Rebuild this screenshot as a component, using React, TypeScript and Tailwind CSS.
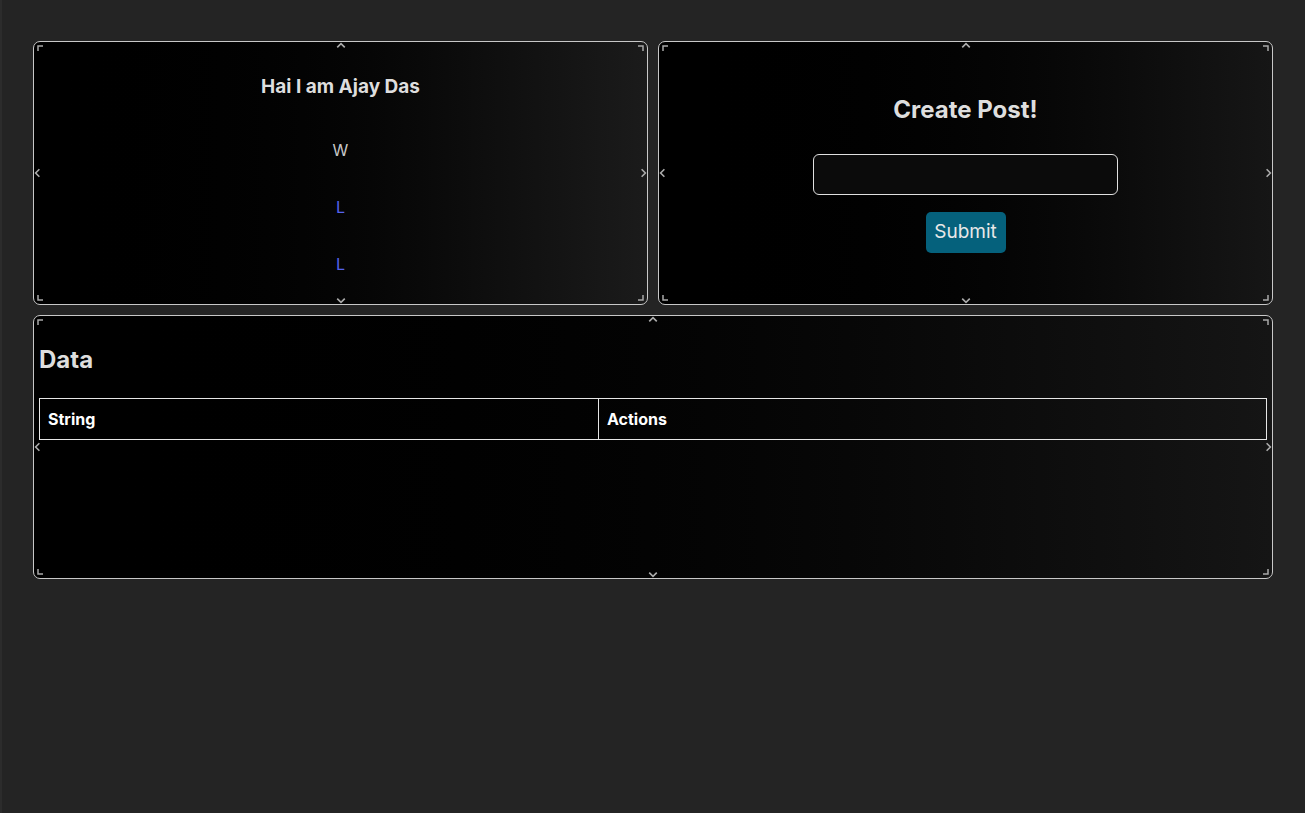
import type { ReactNode } from "react";

function Chevron({ dir }: { dir: "up" | "down" | "left" | "right" }) {
  const d = {
    up: "M1 5 L4.5 1.5 L8 5",
    down: "M1 1.5 L4.5 5 L8 1.5",
    left: "M5 1 L1.5 4.5 L5 8",
    right: "M1.5 1 L5 4.5 L1.5 8",
  }[dir];
  const box = dir === "up" || dir === "down" ? "0 0 9 6.5" : "0 0 6.5 9";
  const size = dir === "up" || dir === "down" ? "h-[7px] w-[10px]" : "h-[10px] w-[7px]";
  return (
    <svg viewBox={box} className={size} fill="none" stroke="#ababab" strokeWidth="1.5">
      <path d={d} />
    </svg>
  );
}

function Corner({ pos }: { pos: "tl" | "tr" | "bl" | "br" }) {
  const d = {
    tl: "M1 6 L1 1 L6 1",
    tr: "M0 1 L5 1 L5 6",
    bl: "M1 0 L1 5 L6 5",
    br: "M0 5 L5 5 L5 0",
  }[pos];
  return (
    <svg viewBox="0 0 6 6" className="h-[6px] w-[6px]" fill="none" stroke="#a8a8a8" strokeWidth="1.5">
      <path d={d} />
    </svg>
  );
}

function Panel({ children, className }: { children: ReactNode; className: string }) {
  return (
    <section className={`relative h-[264px] overflow-hidden rounded-[7px] border border-[#c8c8c8] ${className}`}>
      {children}
      <span className="absolute left-[3px] top-[3px] flex"><Corner pos="tl" /></span>
      <span className="absolute right-[3px] top-[3px] flex"><Corner pos="tr" /></span>
      <span className="absolute bottom-[3px] left-[3px] flex"><Corner pos="bl" /></span>
      <span className="absolute bottom-[3px] right-[3px] flex"><Corner pos="br" /></span>
      <span className="absolute left-1/2 top-[0px] flex -translate-x-1/2"><Chevron dir="up" /></span>
      <span className="absolute bottom-[0px] left-1/2 flex -translate-x-1/2"><Chevron dir="down" /></span>
      <span className="absolute left-[0px] top-1/2 flex -translate-y-1/2"><Chevron dir="left" /></span>
      <span className="absolute right-[0px] top-1/2 flex -translate-y-1/2"><Chevron dir="right" /></span>
    </section>
  );
}

export default function App() {
  const items = [
    { label: "W", color: "text-[#c8c8c8]" },
    { label: "L", color: "text-[#5563ee]" },
    { label: "L", color: "text-[#5563ee]" },
  ];

  return (
    <main
      className="min-h-[813px] border-l-2 border-[#2c2c2c] bg-[#242424] pl-[31px] pr-[32px] pt-[41px]"
      style={{ fontFamily: "Inter, 'Noto Sans', sans-serif" }}
    >
      <div className="grid grid-cols-2 gap-[10px]">
        <Panel className="bg-gradient-to-r from-black to-[#1b1b1b]">
          <div className="flex flex-col items-center pt-[31px]">
            <h1 className="text-[19px] font-bold leading-[28px] text-[#dedede]">Hai I am Ajay Das</h1>
            <ul className="mt-[37px] flex flex-col items-center gap-[33px]">
              {items.map((item, i) => (
                <li key={i} className={`text-[16px] leading-[24px] ${item.color}`}>
                  {item.label}
                </li>
              ))}
            </ul>
          </div>
        </Panel>

        <Panel className="bg-gradient-to-r from-black to-[#161616]">
          <div className="flex flex-col items-center pt-[52px]">
            <h2 className="text-[24px] font-bold leading-[32px] text-[#dedede]">Create Post!</h2>
            <input
              className="mt-[28px] h-[41px] w-[305px] rounded-[6px] border border-[#e0e0e0] bg-[#0b0b0b] px-3 text-white outline-none"
              type="text"
            />
            <button
              type="submit"
              className="mt-[17px] h-[41px] w-[80px] rounded-[5px] bg-[#05617c] text-[19px] text-[#e8e8e8]"
            >
              Submit
            </button>
          </div>
        </Panel>
      </div>

      <div className="mt-[10px]">
        <Panel className="bg-gradient-to-r from-black to-[#151515]">
          <div className="px-[5px] pt-[28px]">
            <h2 className="text-[24px] font-bold leading-[32px] text-[#dedede]">Data</h2>
            <table className="mt-[22px] w-full border-collapse border border-[#e6e6e6] text-left">
              <thead>
                <tr>
                  <th className="w-[559px] border border-[#e6e6e6] px-2 py-2 text-[16px] font-bold leading-[24px] text-white">
                    String
                  </th>
                  <th className="border border-[#e6e6e6] px-2 py-2 text-[16px] font-bold leading-[24px] text-white">
                    Actions
                  </th>
                </tr>
              </thead>
              <tbody />
            </table>
          </div>
        </Panel>
      </div>
    </main>
  );
}
